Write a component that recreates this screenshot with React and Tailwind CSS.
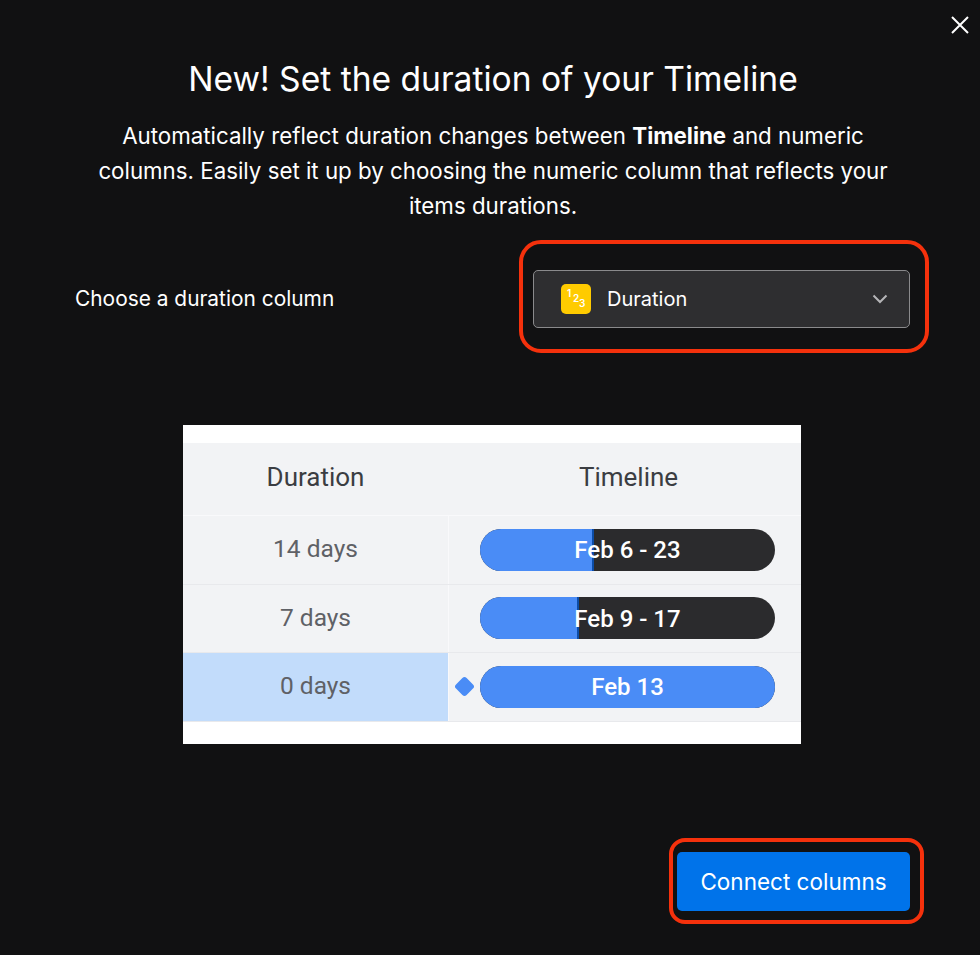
import React from 'react';

const Bar = ({ label, fill, edge }) => (
  <div className="relative flex h-[42px] w-[295px] items-center justify-center overflow-hidden rounded-full bg-[#2b2b2d]">
    <div className={`absolute inset-y-0 left-0 bg-[#4a8cf6] ${edge ? 'border-r-2 border-[#0c4da8]' : ''}`} style={{ width: fill }} />
    <span className="relative pt-[1px] text-[24px] font-medium text-white">{label}</span>
  </div>
);

const Row = ({ days, label, fill, active, diamond }) => (
  <div className="flex h-[68.5px] border-b border-[#e8e9ec]">
    <div className={`flex w-[265px] items-center justify-center text-[24.5px] text-[#5f6166] ${active ? 'bg-[#c2dcfb]' : ''}`}>
      {days}
    </div>
    <div className="relative flex flex-1 items-center border-l border-[#f9f9fb] pl-[31px]">
      {diamond && <div className="absolute left-[8px] h-[15px] w-[15px] rotate-45 rounded-[3px] bg-[#4a8cf6]" />}
      <Bar label={label} fill={fill} edge={!active} />
    </div>
  </div>
);

const App = () => {
  return (
    <div className="relative h-[955px] w-[980px] overflow-hidden bg-[#111112] font-['Inter',sans-serif] text-white">
      <button className="absolute right-[10px] top-[15px] text-white">
        <svg width="20" height="20" viewBox="0 0 20 20" fill="none" stroke="currentColor" strokeWidth="2">
          <path d="M2 2 L18 18 M18 2 L2 18" />
        </svg>
      </button>

      {/* Encabezado */}
      <div className="flex flex-col items-center pl-[6px] pt-[57px]">
        <h1 className="text-[33.6px] leading-[44px] font-normal">New! Set the duration of your Timeline</h1>
        <p className="mt-[17px] w-[820px] text-center text-[22.3px] leading-[35px]">
          Automatically reflect duration changes between <b className="font-bold">Timeline</b> and numeric
          <br />
          columns. Easily set it up by choosing the numeric column that reflects your
          <br />
          items durations.
        </p>
      </div>

      {/* Selector */}
      <div className="mt-[17px] flex items-center justify-between pl-[75px] pr-[51px]">
        <span className="pt-[4px] text-[20.9px]">Choose a duration column</span>
        <div className="h-[113px] w-[410px] rounded-[22px] border-[4px] border-[#f5310c] px-[10px] pt-[26px]">
          <div className="flex h-[58px] w-[377px] items-center rounded-[5px] border border-[#8a8a8c] bg-[#2e2e30] pl-[27px] pr-[20px]">
            <div className="relative h-[30px] w-[30px] rounded-[5px] bg-[#ffcb00] text-[10px] leading-none font-semibold text-white">
              <span className="absolute left-[6px] top-[4px]">1</span>
              <span className="absolute left-[12px] top-[9px]">2</span>
              <span className="absolute left-[18px] top-[14px]">3</span>
            </div>
            <span className="ml-[16px] flex-1 text-[20px]">Duration</span>
            <svg width="18" height="18" viewBox="0 0 18 18" fill="none" stroke="#b5b5b7" strokeWidth="2">
              <path d="M2.5 5.5 L9 12 L15.5 5.5" />
            </svg>
          </div>
        </div>
      </div>

      {/* Imagen de la tabla */}
      <div className="ml-[183px] mt-[72px] h-[319px] w-[618px] bg-white pt-[18px] font-['Roboto',sans-serif]">
        <div className="bg-[#f2f3f5]">
          <div className="flex h-[73px] border-b border-[#f9f9fb] pb-[3px] text-[26px] text-[#3b3d42]">
            <div className="flex w-[265px] items-center justify-center">Duration</div>
            <div className="flex flex-1 items-center justify-center pl-[8px]">Timeline</div>
          </div>
          <Row days="14 days" label="Feb 6 - 23" fill="114px" />
          <Row days="7 days" label="Feb 9 - 17" fill="99px" />
          <Row days="0 days" label="Feb 13" fill="100%" active diamond />
        </div>
      </div>

      {/* Boton */}
      <div className="mt-[94px] flex justify-end pr-[56px]">
        <div className="flex h-[86px] w-[255px] items-center rounded-[16px] border-[4px] border-[#f5310c] pl-[4px]">
          <button className="h-[59px] w-[233px] rounded-[5px] bg-[#0073ea] pt-[2px] text-[22.5px] text-white">
            Connect columns
          </button>
        </div>
      </div>
    </div>
  );
};

export default App;
